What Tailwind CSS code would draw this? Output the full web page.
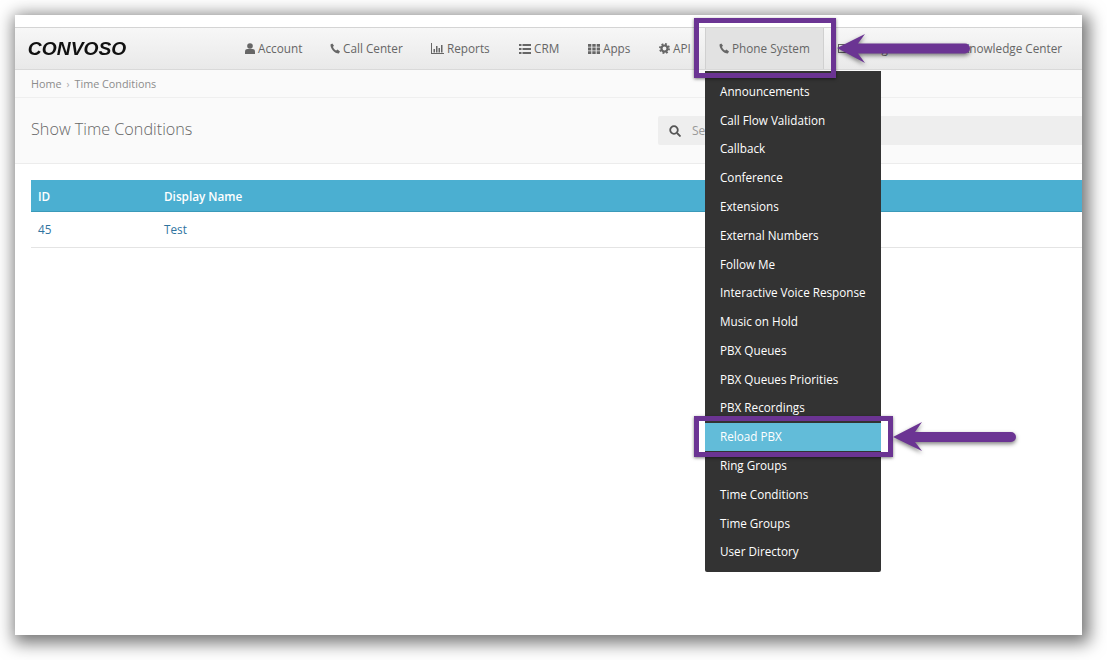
<!DOCTYPE html>
<html lang="en">
<head>
    <meta charset="UTF-8">
    <title>Show Time Conditions</title>
    <script src="https://cdn.jsdelivr.net/npm/@tailwindcss/browser@4"></script>
</head>
<body class="bg-white w-[1107px] h-[660px] overflow-hidden font-['Open_Sans',sans-serif]">
    <div class="relative w-[1107px] h-[660px] pt-[15px] pl-[15px]">
        <!-- window -->
        <div class="w-[1067px] h-[620px] bg-white overflow-hidden shadow-[3px_4px_16px_4px_rgba(0,0,0,0.55)] flex flex-col">
            <div class="h-[12px] bg-white border-b border-[#d4d4d4] box-content"></div>
            <nav class="h-[41px] flex items-center bg-gradient-to-b from-[#f7f7f7] to-[#e9e9e9] border-b border-[#d9d9d9] box-content text-[11.75px] text-[#666] relative">
                <div class="pl-[12px] w-[230px] font-['Liberation_Sans',sans-serif] font-bold italic text-[18px] text-[#111] scale-x-[1.07] origin-left leading-none">CONVOSO</div>
                <a class="absolute left-[230px] flex items-center gap-[3px]"><svg class="w-[10px] h-[11px]" viewBox="0 0 10 11" fill="#666"><circle cx="5" cy="3" r="2.8"/><path d="M0 11V8.500C0 6.800 1.200 6 2.500 6h5C8.800 6 10 6.800 10 8.500V11z"/></svg>Account</a>
                <a class="absolute left-[315px] flex items-center gap-[3px]"><svg class="w-[10px] h-[11px]" viewBox="0 0 10 11" fill="#666"><path d="M2.300.5 0.500 1.500C.2 5.500 4.500 10.500 8.800 10.500L10 8.500 7.500 6.500 6.200 7.500C4.800 7 3.300 5.200 3 3.700L4 2.800z"/></svg>Call Center</a>
                <a class="absolute left-[416px] flex items-center gap-[3px]"><svg class="w-[13px] h-[11px]" viewBox="0 0 13 11" fill="#666"><path d="M0 0h1v10h12v1H0zM2.500 6h1.500v3.500H2.500zM5 3h1.500v6.500H5zM7.500 5H9v4.500H7.500zM10 2h1.500v7.500H10z"/></svg>Reports</a>
                <a class="absolute left-[504px] flex items-center gap-[3px]"><svg class="w-[12px] h-[10px]" viewBox="0 0 12 10" fill="#666"><path d="M0 0h2.500v2H0zM3.500 0H12v2H3.500zM0 4h2.500v2H0zM3.500 4H12v2H3.500zM0 8h2.500v2H0zM3.500 8H12v2H3.500z"/></svg>CRM</a>
                <a class="absolute left-[573px] flex items-center gap-[3px]"><svg class="w-[12px] h-[10px]" viewBox="0 0 12 10" fill="#666"><path d="M0 0h3.300v2.800H0zM4.300 0h3.400v2.800H4.300zM8.700 0H12v2.800H8.700zM0 3.600h3.300v2.800H0zM4.300 3.600h3.400v2.800H4.300zM8.700 3.600H12v2.800H8.700zM0 7.200h3.300V10H0zM4.300 7.200h3.400V10H4.300zM8.700 7.200H12V10H8.700z"/></svg>Apps</a>
                <a class="absolute left-[644px] flex items-center gap-[3px]"><svg class="w-[11px] h-[11px]" viewBox="0 0 12 12"><circle cx="6" cy="6" r="3.300" fill="none" stroke="#666" stroke-width="2.400"/><circle cx="6" cy="6" r="5" fill="none" stroke="#666" stroke-width="2" stroke-dasharray="2 1.930"/></svg>API</a>
                <a class="absolute left-[690px] top-0 h-[41px] w-[119px] flex items-center gap-[3px] pl-[13px] bg-[#e2e2e2] border-x border-[#d0d0d0]"><svg class="w-[10px] h-[11px]" viewBox="0 0 10 11" fill="#666"><path d="M2.300.5 0.500 1.500C.2 5.500 4.500 10.500 8.800 10.500L10 8.500 7.500 6.500 6.200 7.500C4.800 7 3.300 5.200 3 3.700L4 2.800z"/></svg>Phone System</a>
                <a class="absolute left-[823px] flex items-center gap-[3px]"><svg class="w-[11px] h-[11px]" viewBox="0 0 11 11" fill="#666"><path d="M0 1h11v9H0zM1 2v7h9V2z"/></svg>Pacing</a>
                <a class="absolute left-[947px] flex items-center">Knowledge Center</a>
            </nav>
            <div class="h-[26px] flex items-center pl-[16px] gap-[5px] pt-[1px] bg-[#fafafa] border-b border-[#efefef] box-content text-[10.8px] text-[#8c8c8c]">
                <span>Home</span><span class="text-[#aaa] text-[10px]">&rsaquo;</span><span>Time Conditions</span>
            </div>
            <div class="h-[65px] flex bg-[#fafafa] border-b border-[#ececec] box-content pl-[16px] relative">
                <h1 class="text-[16.2px] font-light text-[#666] leading-none mt-[23px]">Show Time Conditions</h1>
                <div class="absolute left-[643px] top-[18px] right-0 h-[29px] rounded-l-[2px] bg-[#eee] flex items-center pl-[11px] gap-[11px] text-[12px] text-[#999]">
                    <svg class="w-[12px] h-[12px]" viewBox="0 0 12 12" fill="none" stroke="#555" stroke-width="1.800"><circle cx="5" cy="5" r="3.800"/><path d="M8 8l3.500 3.500"/></svg>Search
                </div>
            </div>
            <div class="pl-[16px] pt-[16px] flex-1">
                <div class="h-[32px] pt-[2px] flex items-center bg-[#4bafd1] border-b border-[#3a9ab9] text-white text-[11.75px] font-semibold">
                    <span class="w-[133px] pl-[7px]">ID</span><span>Display Name</span>
                </div>
                <div class="h-[36px] flex items-center border-b border-[#e4e4e4] text-[#30749f] text-[11.75px]">
                    <span class="w-[133px] pl-[7px]">45</span><span>Test</span>
                </div>
            </div>
        </div>

        <!-- dropdown -->
        <ul class="absolute left-[705px] top-[71px] w-[176px] h-[501px] pt-[6.1px] bg-[#333] rounded-b-[2px] text-white text-[11.7px]">
            <li class="h-[28.8px] flex items-center pl-[15px]">Announcements</li>
            <li class="h-[28.8px] flex items-center pl-[15px]">Call Flow Validation</li>
            <li class="h-[28.8px] flex items-center pl-[15px]">Callback</li>
            <li class="h-[28.8px] flex items-center pl-[15px]">Conference</li>
            <li class="h-[28.8px] flex items-center pl-[15px]">Extensions</li>
            <li class="h-[28.8px] flex items-center pl-[15px]">External Numbers</li>
            <li class="h-[28.8px] flex items-center pl-[15px]">Follow Me</li>
            <li class="h-[28.8px] flex items-center pl-[15px]">Interactive Voice Response</li>
            <li class="h-[28.8px] flex items-center pl-[15px]">Music on Hold</li>
            <li class="h-[28.8px] flex items-center pl-[15px]">PBX Queues</li>
            <li class="h-[28.8px] flex items-center pl-[15px]">PBX Queues Priorities</li>
            <li class="h-[28.8px] flex items-center pl-[15px]">PBX Recordings</li>
            <li class="h-[28.8px] flex items-center pl-[15px] bg-[#62bcd9]">Reload PBX</li>
            <li class="h-[28.8px] flex items-center pl-[15px]">Ring Groups</li>
            <li class="h-[28.8px] flex items-center pl-[15px]">Time Conditions</li>
            <li class="h-[28.8px] flex items-center pl-[15px]">Time Groups</li>
            <li class="h-[28.8px] flex items-center pl-[15px]">User Directory</li>
        </ul>

        <!-- annotations -->
        <div class="absolute left-[694px] top-[18px] w-[142px] h-[60px] border-[5px] border-[#6b3493] shadow-[0_1px_3px_rgba(0,0,0,0.5)]"></div>
        <div class="absolute left-[694px] top-[416px] w-[199px] h-[41px] border-[5px] border-[#6b3493] shadow-[0_1px_3px_rgba(0,0,0,0.5)]"></div>
        <svg class="absolute left-0 top-0 w-[1107px] h-[660px] drop-shadow-[0_2px_2px_rgba(0,0,0,0.5)]" viewBox="0 0 1107 660" fill="#6b3493">
            <path d="M837 48 865 34 858 43.500H965a5 5 0 0 1 0 10H858L865 63z"/>
            <path d="M893 437 922 422 915 432H1011a5 5 0 0 1 0 10H915L922 451z"/>
        </svg>
    </div>
</body>
</html>
